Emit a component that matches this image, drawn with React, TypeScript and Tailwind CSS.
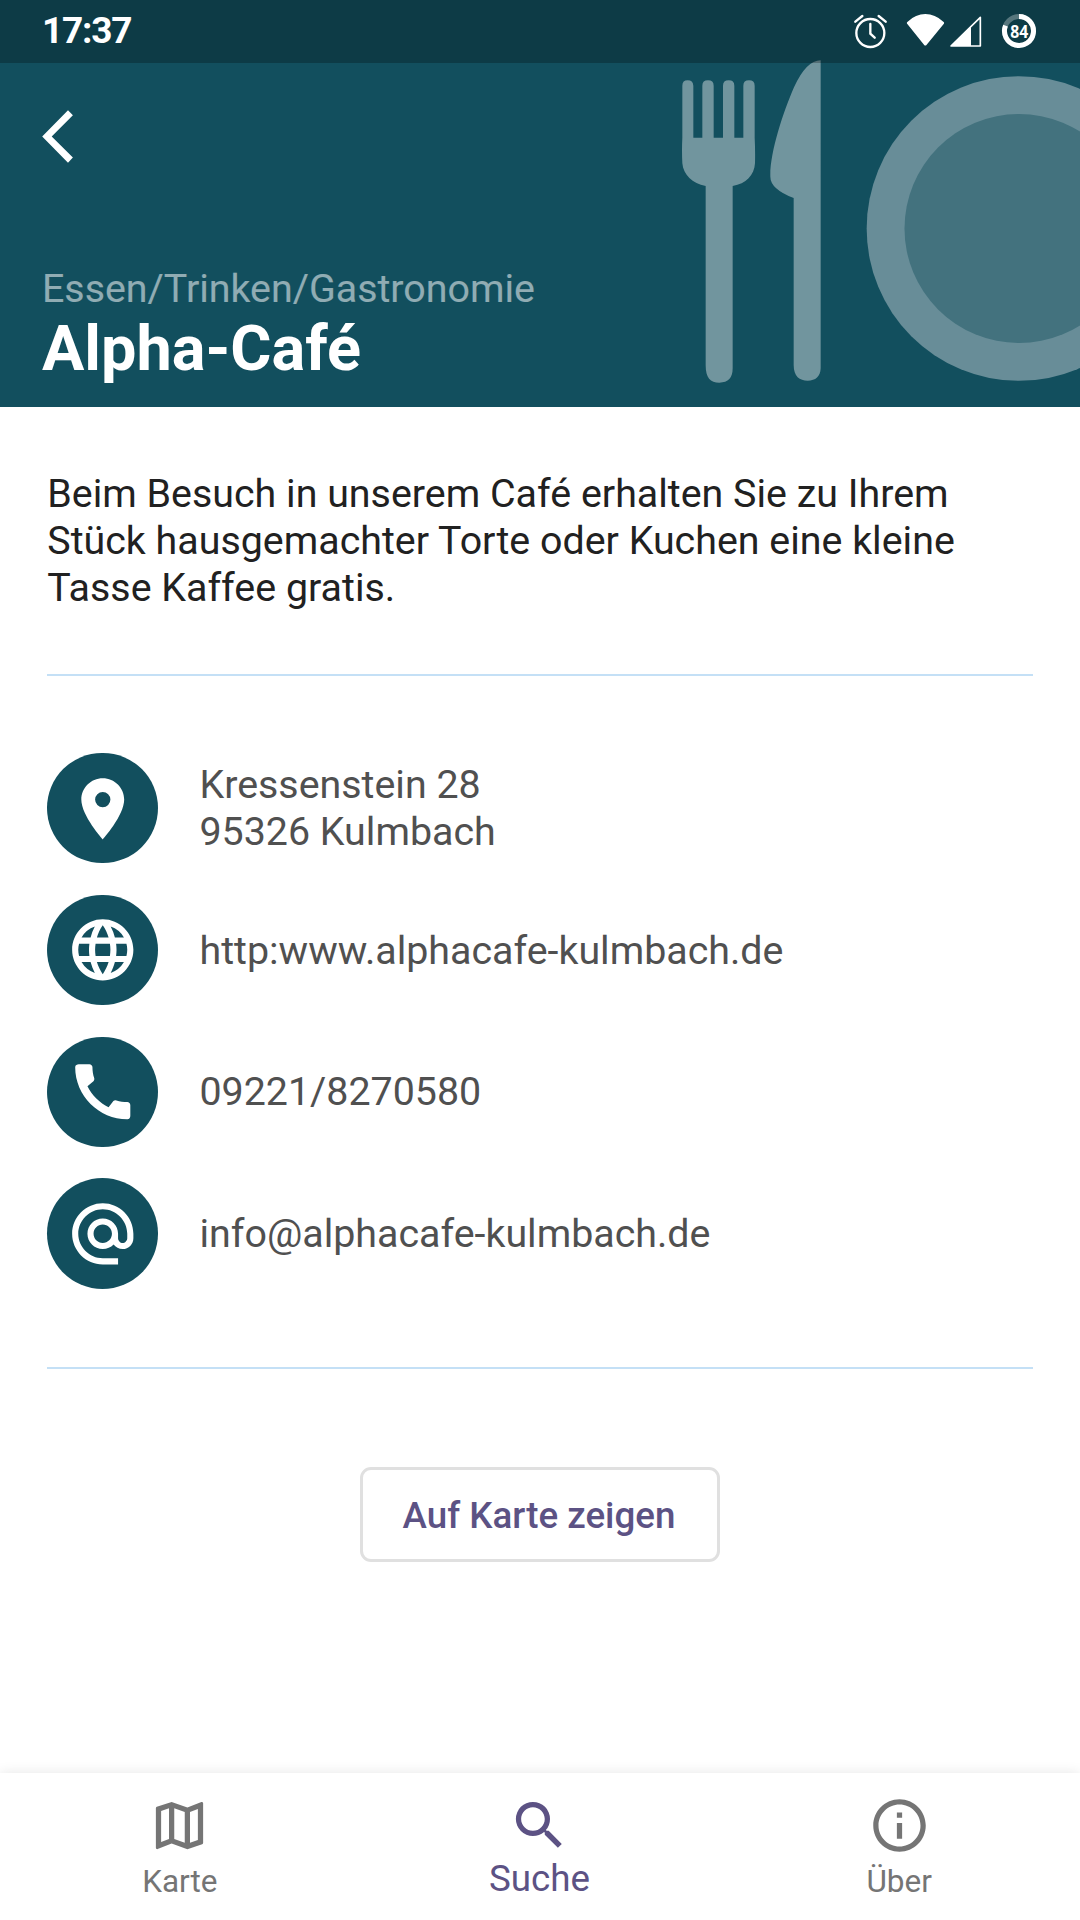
import type { ReactNode } from "react";
import {
  MdAlternateEmail,
  MdCall,
  MdInfoOutline,
  MdLanguage,
  MdLocationOn,
  MdOutlineMap,
  MdSearch,
} from "react-icons/md";

function StatusBar() {
  return (
    <div className="relative flex h-[63px] items-start justify-between bg-black/25 pr-[43px] pl-[42px] text-white">
      <span className="mt-[9px] text-[37px] leading-[43px] font-bold tracking-[-1.2px]">17:37</span>
      <div className="mt-[13px] flex">
        <svg className="h-[37px] w-[33px]" viewBox="102 39 99 111" fill="none" stroke="currentColor" strokeLinecap="round">
          <circle cx="151" cy="99" r="42" strokeWidth="7" />
          <path d="M106 65 127 48M197 65 176 48M151 72V101L164 113" strokeWidth="7" />
        </svg>
        <svg className="ml-[19px] h-[37px] w-[39px]" viewBox="258 39 117 111" fill="currentColor">
          <path d="M262 72C260 69 260 67 263 65Q287 42 316 42T370 65C373 67 373 69 371 72L320 134Q316 139 312 134Z" />
        </svg>
        <svg className="ml-[4px] h-[37px] w-[33px]" viewBox="387 39 99 111">
          <path d="M393 138 481 52V138Z" fill="none" stroke="currentColor" strokeWidth="5" strokeLinejoin="round" />
          <path d="M393 138 453 78V138Z" fill="currentColor" />
        </svg>
        <svg className="ml-[19px] h-[37px] w-[36px]" viewBox="543 39 108 111">
          <circle cx="597" cy="93" r="43.500" fill="none" stroke="currentColor" strokeOpacity="0.3" strokeWidth="15" />
          <path d="M597 49.500A43.500 43.500 0 1 1 556.500 77" fill="none" stroke="currentColor" strokeWidth="15" />
          <text
            x="571"
            y="114"
            className="font-['Open_Sans',sans-serif]"
            fill="currentColor"
            fontSize="55"
            fontWeight="700"
            textLength="54"
            lengthAdjust="spacingAndGlyphs"
          >
            84
          </text>
        </svg>
      </div>
    </div>
  );
}

function TableSetting() {
  return (
    <svg className="absolute top-[40px] right-0 h-[367px] w-[420px]" viewBox="0 0 1260 1101">
      <path
        fill="#71959e"
        d="M67 137Q67 121 83 121T100 137V293H127V137Q127 121 144 121T161 137V293H189V137Q189 121 206 121T223 137V293H250V137Q250 121 267 121T284 137V293Q286 330 285 370C283 405 258 432 218 438V985C218 1014 205 1028 178 1028S137 1014 137 975V438C97 430 70 405 67 370Q65 330 67 293Z"
      />
      <path
        fill="#71959e"
        d="M482 61V985C481 1010 467 1022 443 1022S401 1010 401 975V474Q331 447 331 410C329 340 369 218 402 142Q439 61 482 61Z"
      />
      <circle cx="1077" cy="565.500" r="457" fill="#688d98" />
      <circle cx="1077" cy="565.500" r="343.500" fill="#43727e" />
    </svg>
  );
}

function ContactRow({ icon, children }: { icon: ReactNode; children: ReactNode }) {
  return (
    <li className="flex items-center gap-[42px]">
      <span className="flex h-[110.250px] w-[110.250px] items-center justify-center rounded-full bg-[#124f5e] text-[73.500px] text-white">
        {icon}
      </span>
      <span className="text-[39.375px] leading-[47px] text-[#505050]">{children}</span>
    </li>
  );
}

export default function App() {
  return (
    <div className="flex h-[1920px] w-[1080px] flex-col overflow-hidden bg-white font-['Roboto',sans-serif]">
      <header className="relative flex h-[407px] shrink-0 flex-col bg-[#124f5e]">
        <TableSetting />
        <StatusBar />
        <button className="mt-[46px] ml-[41px] h-[55px] w-[34px] text-white" aria-label="Zurück">
          <svg className="h-[55px] w-[34px]" viewBox="41 109 34 55" fill="currentColor">
            <path d="M42.200 136.500 68 110.300 72.900 115.300 51.700 136.500 72.900 157.500 68 162.700Z" />
          </svg>
        </button>
        <div className="relative mt-auto flex flex-col px-[42px] pb-[21px]">
          <span className="text-[39.375px] leading-[46px] text-white/53">Essen/Trinken/Gastronomie</span>
          <h1 className="text-[63px] leading-[74px] font-bold text-white">Alpha-Café</h1>
        </div>
      </header>

      <main className="flex flex-1 flex-col px-[47.250px]">
        <p className="mt-[63px] text-[39.375px] leading-[47px] tracking-[0.010px] text-[#212121]">
          Beim Besuch in unserem Café erhalten Sie zu Ihrem
          <br />
          Stück hausgemachter Torte oder Kuchen eine kleine
          <br />
          Tasse Kaffee gratis.
        </p>
        <hr className="mt-[63px] border-t-2 border-[#c4e0f6]" />
        <ul className="mt-[77.200px] flex flex-col gap-[31.500px]">
          <ContactRow icon={<MdLocationOn />}>
            Kressenstein 28
            <br />
            95326 Kulmbach
          </ContactRow>
          <ContactRow icon={<MdLanguage />}>http:www.alphacafe-kulmbach.de</ContactRow>
          <ContactRow icon={<MdCall />}>09221/8270580</ContactRow>
          <ContactRow icon={<MdAlternateEmail />}>info@alphacafe-kulmbach.de</ContactRow>
        </ul>
        <hr className="mt-[78.400px] border-t-2 border-[#c4e0f6]" />
        <button className="mt-[98px] h-[95px] w-[360px] self-center rounded-[11px] border-[3px] border-[#e0e0e0] pt-[2px] pr-[2px] text-[36.750px] leading-[43px] font-medium text-[#5c5284]">
          Auf Karte zeigen
        </button>
      </main>

      <nav className="grid h-[147px] shrink-0 grid-cols-3 bg-white pr-px text-[#757575] shadow-[0_0_12px_rgba(0,0,0,0.10)]">
        <div className="flex flex-col items-center pt-[21px]">
          <MdOutlineMap className="size-[63px]" />
          <span className="mt-[6px] text-[31.500px] leading-[37px]">Karte</span>
        </div>
        <div className="flex flex-col items-center pt-[21px] text-[#5c5284]">
          <MdSearch className="size-[63px]" />
          <span className="text-[36.750px] leading-[43px]">Suche</span>
        </div>
        <div className="flex flex-col items-center pt-[21px]">
          <MdInfoOutline className="size-[63px]" />
          <span className="mt-[6px] text-[31.500px] leading-[37px]">Über</span>
        </div>
      </nav>
    </div>
  );
}
